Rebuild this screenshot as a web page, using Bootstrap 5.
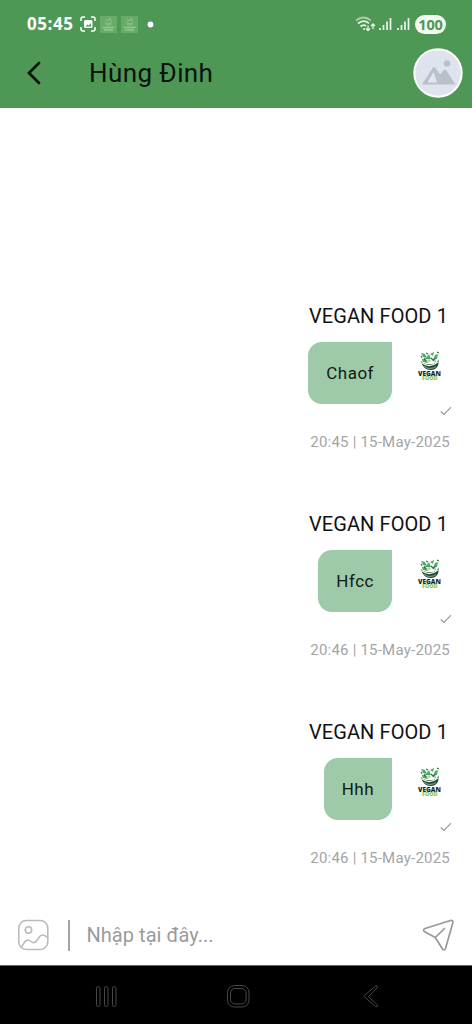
<!DOCTYPE html>
<html lang="vi">
<head>
<meta charset="utf-8">
<meta name="viewport" content="width=device-width, initial-scale=1">
<title>Hùng Đinh</title>
<link rel="stylesheet" href="https://cdn.jsdelivr.net/npm/bootstrap@5.3.0/dist/css/bootstrap.min.css">
<style>
body{font-family:Roboto,"Noto Sans",sans-serif;color:#111;background:#fff}
svg{display:block;flex:none}
.phone{height:1024px;width:472px}
.top-area{background:#4f9755;height:107.5px}
.status{height:48px;padding:0 26px 0 27px}
.clock{font:700 17px/24px "Open Sans",sans-serif;letter-spacing:.55px;width:53px;color:#fff}
.power{width:31px;height:19px;background:#f3fbf0;color:#4f9755;font:700 14.5px/19px "Open Sans",sans-serif;letter-spacing:-.1px}
.appbar{height:50px;padding:0 9px 0 22px}
.title{font-size:26px;line-height:34px;color:#0a140b;margin-left:43px;letter-spacing:.4px}
.chat{padding-top:193px;min-height:0}
.msg{height:208px}
.who{font-size:20px;line-height:24px;letter-spacing:.1px;margin:3px 24px 14px 0}
.bubble{height:62px;padding:2px 18px 0;background:#9ecaa9;border-radius:14px 0 14px 14px;font-size:17px;letter-spacing:.5px;color:#101a12}
.logo-box{width:80px;padding:8px 0 0 25px}
.stamp{font-size:15px;line-height:20px;letter-spacing:.22px;color:#a5a5a5;margin:16px 22px 0 0}
.tick{margin:2px 20px 0 0}
.composer{height:60px;padding:0 17px}
.rule{width:1.5px;height:31px;background:#a4a4a4;margin:0 17px 0 18px}
.hint{font-size:20px;letter-spacing:.04px;color:#9b9b9b}
.softkeys{height:59px;background:#000;border-top:1px solid #666}
</style>
</head>
<body>
<svg width="0" height="0" class="position-absolute">
<defs>
<symbol id="logo" viewBox="0 0 26 32">
<path d="M4 11Q7 15 14 14.200Q20 13.500 21.500 9.500Q22.500 18.500 15 20Q6 20.500 4 11z" fill="#23493b"/>
<path d="M5 13Q13 18.500 21 12" fill="none" stroke="#e8f5e8" stroke-width="1.200"/>
<path d="M7 16.500Q13 20.500 19 16.500" fill="none" stroke="#72ad76" stroke-width="1"/>
<path d="M4 3l4 1 2 4-4-1zM8 9l4-5 2 5zM13 4l4-2-1 4zM16 10l2-5 3-1-1 5zM5 9l4 0 2 4-5-1z" fill="#4fa967"/>
<path d="M9 3l2 1M20 2l2 1M4 6l1 2M14 8l3 3M7 8l2 3M18 8l-2 3" stroke="#276d49" stroke-width="1.100"/>
<circle cx="12" cy="10.500" r="1.500" fill="#b7d777"/><circle cx="18" cy="11" r="1" fill="#8bcf83"/>
<text x="1" y="25.700" font-family="Open Sans, sans-serif" font-weight="800" font-size="6" textLength="23" lengthAdjust="spacingAndGlyphs" fill="#173027">VEGAN</text>
<text x="5" y="30" font-family="Open Sans, sans-serif" font-weight="800" font-size="5.200" textLength="15.500" lengthAdjust="spacingAndGlyphs" fill="#86c556">FOOD</text>
</symbol>
<symbol id="check" viewBox="0 0 12 10"><path d="M.8 5.500l3.200 3L11 1.200" fill="none" stroke="#999" stroke-width="1.200"/></symbol>
<symbol id="app" viewBox="0 0 17 17"><rect width="17" height="17" fill="#68aa68"/><path d="M5 5.500Q8.500 10 12 5.500M5.500 7.500Q8.500 11 11.500 7.500M6 3l2 2 2-3 1 3" fill="none" stroke="#8fc68d" stroke-width="1"/><path d="M2.500 11.500h12M4 14h9" stroke="#94ca91" stroke-width="1.400"/></symbol>
<symbol id="bars" viewBox="0 0 13 14"><path d="M1 11v2M4.500 8v5M8 4.500v8.500M11.500 1v12" stroke="#e9f7e8" stroke-width="1.700"/></symbol>
</defs>
</svg>
<div class="phone d-flex flex-column overflow-hidden">
<header class="top-area flex-shrink-0">
<div class="status d-flex align-items-center">
<span class="clock">05:45</span>
<svg width="16" height="16" viewBox="0 0 16 16" fill="none" stroke="#fff" stroke-width="1.500"><path d="M1 5V3q0-2 2-2h2M11 1h2q2 0 2 2v2M15 11v2q0 2-2 2h-2M5 15H3q-2 0-2-2v-2"/><rect x="4" y="4" width="8.500" height="8" rx="1.500" fill="#fff" stroke="none"/><path d="M5.500 10.500l2-2 1.300 1L11 7v3.500z" fill="#4f9755" stroke="none"/></svg>
<svg class="ms-1" width="17" height="17"><use href="#app"/></svg>
<svg class="ms-1" width="17" height="17"><use href="#app"/></svg>
<svg style="margin-left:9px" width="7" height="7"><circle cx="3.500" cy="3.500" r="2.900" fill="#fff"/></svg>
<svg class="ms-auto" width="21" height="16" viewBox="0 0 21 16" fill="none" stroke="#e9f7e8" stroke-width="1.700"><path d="M1 4.500Q8.500-1.500 16 4.500" stroke="#a8d1a7"/><path d="M3 7.500Q8.500 3 14 7.300M5.500 10.500Q8.500 8 11 9.900"/><path d="M8 13h2" /><path d="M13 9.500v5M11 12.500l2 2 2-2M18 13V8M16 10l2-2 2 2" stroke-width="1.300"/></svg>
<svg style="margin:0 5px 0 3px" width="13" height="14"><use href="#bars"/></svg>
<svg style="margin-right:5px" width="13" height="14"><use href="#bars"/></svg>
<span class="power rounded-pill text-center">100</span>
</div>
<div class="appbar d-flex align-items-center">
<svg width="24" height="28" viewBox="0 0 24 28"><path d="M17 4L7 14l10 10" fill="none" stroke="#07140a" stroke-width="2.800" stroke-linecap="round"/></svg>
<span class="title">Hùng Đinh</span>
<svg class="ms-auto" width="50" height="50" viewBox="0 0 50 50"><circle cx="25" cy="25" r="23.700" fill="#dfe4ec" stroke="#fff" stroke-width="2"/><circle cx="34" cy="15.500" r="3.200" fill="#b9c0ca"/><path d="M9 36.500L20 19.500q1-1 2 0l5 7 4-4.500q1-1 2 0l9.500 14.500z" fill="#b9c0ca"/><path d="M14.500 34.500l6-10.500 3.500 10.500z" fill="#e2e7ee"/></svg>
</div>
</header>
<main class="chat flex-grow-1 overflow-hidden">
<section class="msg d-flex flex-column align-items-end"><div class="who">VEGAN FOOD 1</div><div class="d-flex"><div class="bubble d-flex align-items-center">Chaof</div><div class="logo-box"><svg width="26" height="32"><use href="#logo"/></svg></div></div><svg class="tick" width="12" height="10"><use href="#check"/></svg><time class="stamp">20:45 | 15-May-2025</time></section>
<section class="msg d-flex flex-column align-items-end"><div class="who">VEGAN FOOD 1</div><div class="d-flex"><div class="bubble d-flex align-items-center">Hfcc</div><div class="logo-box"><svg width="26" height="32"><use href="#logo"/></svg></div></div><svg class="tick" width="12" height="10"><use href="#check"/></svg><time class="stamp">20:46 | 15-May-2025</time></section>
<section class="msg d-flex flex-column align-items-end"><div class="who">VEGAN FOOD 1</div><div class="d-flex"><div class="bubble d-flex align-items-center">Hhh</div><div class="logo-box"><svg width="26" height="32"><use href="#logo"/></svg></div></div><svg class="tick" width="12" height="10"><use href="#check"/></svg><time class="stamp">20:46 | 15-May-2025</time></section>
</main>
<div class="composer d-flex align-items-center flex-shrink-0">
<svg width="33" height="32" viewBox="0 0 33 32" fill="none" stroke="#bbb" stroke-width="1.600"><rect x="1.800" y="1.500" width="29" height="29" rx="7.500"/><circle cx="11.500" cy="11" r="3.200"/><path d="M4.500 28C9 20 11 20 14 22.500S19 23 21 20Q25 12.500 31 19"/></svg>
<div class="rule"></div><span class="hint">Nhập tại đây...</span>
<svg class="ms-auto" width="33" height="32" viewBox="0 0 33 32" fill="none" stroke="#999" stroke-width="1.700" stroke-linejoin="round" stroke-linecap="round"><path d="M3 9.500L28.500 1.500Q31.300 1 30.800 4L23.500 29.500q-1.200 2.500-3 .5L13.300 18.500 2.300 12.500Q.5 11 3 9.500zM13.300 18.500L22.500 9.500"/></svg>
</div>
<nav class="softkeys flex-shrink-0">
<svg width="472" height="58" viewBox="0 0 472 58" fill="none" stroke="#484848" stroke-width="1"><rect x="96.500" y="20.500" width="3.500" height="20" rx="1.700"/><rect x="104.500" y="20.500" width="3.500" height="20" rx="1.700"/><rect x="112.500" y="20.500" width="3.500" height="20" rx="1.700"/><rect x="227.500" y="19.500" width="21.500" height="21.500" rx="7"/><rect x="230.500" y="22.500" width="15.500" height="15.500" rx="4.500"/><path d="M375.500 20q2-1 2 1.500l-9 9 9 8.500q0 2.500-2 1.500L364.500 31q-1-1 0-1.500z"/></svg>
</nav>
</div>
<script src="https://cdn.jsdelivr.net/npm/bootstrap@5.3.0/dist/js/bootstrap.bundle.min.js"></script>
</body>
</html>
